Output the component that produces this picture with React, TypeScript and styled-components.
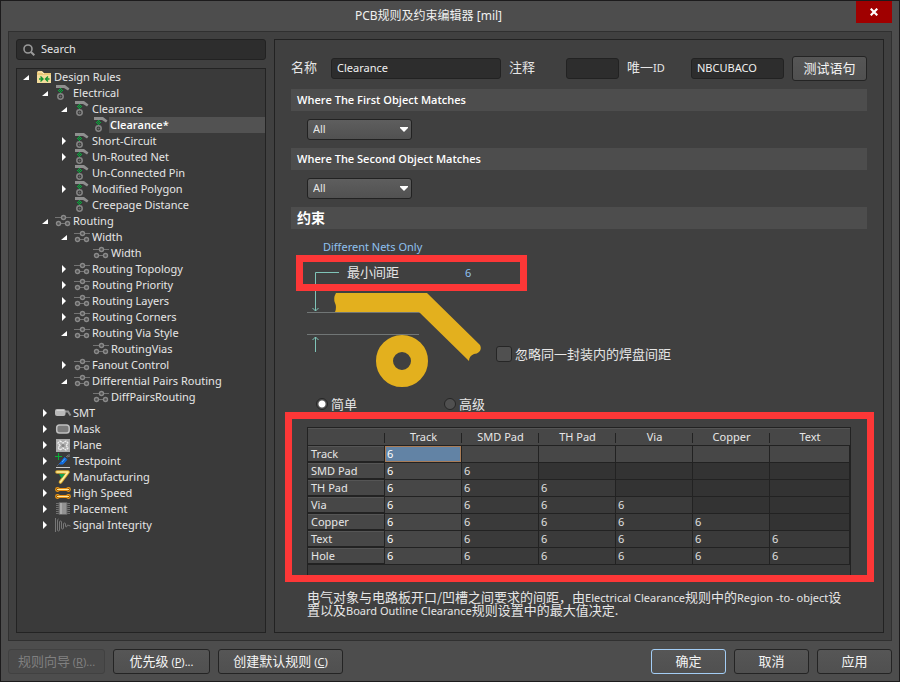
import React from "react";
import styled, { createGlobalStyle, css } from "styled-components";

const LATIN = '"Noto Sans", "Noto Sans CJK SC", sans-serif';
const LATIN_BOLD = '"Open Sans", "Noto Sans", sans-serif';
const CJK = '"Noto Sans CJK SC", "Noto Sans", sans-serif';

const GlobalStyle = createGlobalStyle`
  *, *::before, *::after { box-sizing: border-box; }
  body {
    margin: 0;
    background: #4d4d4d;
    color: #e6e6e6;
    font: 11px/16px ${LATIN};
  }
  button, input, select { font: inherit; color: inherit; margin: 0; }
`;

/* ---------- window frame ---------- */

const Window = styled.div`
  display: flex;
  flex-direction: column;
  min-height: 100vh;
  border: 1px solid #1c1b1c;
  background: #4d4d4d;
`;

const TitleBar = styled.header`
  display: grid;
  grid-template-columns: 1fr 43px;
  height: 30px;
`;

const Title = styled.h1`
  margin: 0;
  text-align: center;
  font: 400 12px/29px ${LATIN};
  color: #f0f0f0;
`;

const CloseButton = styled.button`
  width: 36px;
  height: 22px;
  padding: 0;
  border: 0;
  background: #a00000;
  display: grid;
  place-items: center;
`;

const Body = styled.div`
  flex: 1;
  display: grid;
  grid-template-columns: 250px minmax(0, 1fr);
  gap: 8px;
  margin: 0 7px;
  padding: 7px;
  border: 1px solid #303030;
  background: #404040;
`;

const Footer = styled.footer`
  display: flex;
  gap: 8px;
  padding: 8px 7px 7px;
`;

const Spacer = styled.div`
  flex: 1;
`;

const Button = styled.button<{ $width: number; $primary?: boolean }>`
  flex: none;
  width: ${(p) => p.$width}px;
  height: 25px;
  padding: 0 0 2px;
  border: 1px solid ${(p) => (p.$primary ? "#a3cdf5" : "#242424")};
  border-radius: 3px;
  background: linear-gradient(#565656, #505050);
  color: #f4f4f4;
  font: 13px/20px ${CJK};
  white-space: nowrap;
  &:disabled {
    border-color: #414141;
    background: #4a4a4a;
    color: #808080;
  }
`;

const Small = styled.span`
  font: 11px/10px ${LATIN};
`;

/* ---------- left column ---------- */

const Sidebar = styled.aside`
  display: flex;
  flex-direction: column;
  gap: 8px;
`;

const fieldLook = css`
  height: 21px;
  border: 1px solid #222;
  border-radius: 3px;
  background: #2d2d2d;
  color: #f0f0f0;
`;

const SearchBox = styled.label`
  ${fieldLook}
  display: flex;
  align-items: center;
  gap: 6px;
  padding-left: 6px;
`;

const SearchInput = styled.input`
  flex: 1;
  min-width: 0;
  height: 18px;
  padding: 0 0 2px;
  border: 0;
  outline: 0;
  background: none;
  &::placeholder { color: #e6e6e6; opacity: 1; }
`;

const Tree = styled.ul`
  flex: 1;
  margin: 0;
  padding: 0;
  list-style: none;
  border: 1px solid #232323;
  background: #3a3a3a;
`;

const TreeRow = styled.li<{ $level: number }>`
  display: flex;
  height: 16px;
  padding-left: ${(p) => 5 + p.$level * 19}px;
`;

const Toggle = styled.button`
  width: 8px;
  height: 16px;
  margin-right: 6px;
  padding: 0;
  border: 0;
  background: none;
  display: grid;
  place-items: center;
`;

const TogglePlace = styled.span`
  width: 14px;
`;

const TreeIcon = styled.svg`
  flex: none;
  width: 16px;
  height: 16px;
  overflow: visible;
`;

const TreeLabel = styled.span<{ $selected?: boolean }>`
  flex: 1;
  padding-left: ${(p) => (p.$selected ? 1 : 2)}px;
  white-space: nowrap;
  ${(p) => p.$selected && css`
    background: #525252;
    color: #fff;
    font: 600 11px/16px ${LATIN_BOLD};
  `}
`;

/* ---------- right column ---------- */

const Main = styled.main`
  padding: 16px 16px 14px;
  border: 1px solid #222;
`;

const FieldRow = styled.div`
  display: flex;
  align-items: center;
  height: 25px;
`;

const FieldLabel = styled.label<{ $width: number }>`
  flex: none;
  width: ${(p) => p.$width}px;
  padding-bottom: 3px;
  font: 13px/20px ${CJK};
  white-space: nowrap;
`;

const TextField = styled.input<{ $basis: number }>`
  ${fieldLook}
  flex: 1 1 ${(p) => p.$basis}px;
  width: 0;
  min-width: 0;
  margin-right: 8px;
  padding: 0 5px 2px;
`;

const SectionBar = styled.h2<{ $cjk?: boolean }>`
  height: 22px;
  margin: 8px 0 0;
  padding-left: 6px;
  background: #4d4d4d;
  color: #fff;
  font: ${(p) => (p.$cjk ? `700 14px/20px ${CJK}` : `600 11px/22px ${LATIN_BOLD}`)};
`;

const SelectWrap = styled.div`
  display: grid;
  width: 105px;
  margin: 8px 0 0 16px;
  & > * { grid-area: 1 / 1; }
`;

const Select = styled.select`
  appearance: none;
  height: 21px;
  padding: 0 5px 2px;
  border: 1px solid #222;
  border-radius: 3px;
  background: linear-gradient(#5e5e5e, #515151);
`;

const SelectArrow = styled.svg`
  justify-self: end;
  align-self: center;
  margin-right: 4px;
  pointer-events: none;
`;

const NetScope = styled.p`
  margin: 10px 0 0 32px;
  color: #8fc0f0;
`;

const ClearanceBox = styled.div`
  position: relative;
  z-index: 1;
  display: flex;
  align-items: center;
  width: 231px;
  height: 36px;
  margin-left: 5px;
  padding-left: 44px;
  border: 7px solid #fd3737;
`;

const ClearanceInput = styled.input`
  width: 40px;
  height: 18px;
  padding: 0 0 2px;
  border: 0;
  background: none;
  color: #8fc0f0;
`;

const Scene = styled.div`
  display: flex;
  align-items: flex-start;
  gap: 13px;
  margin: -21px 16px 0;
`;

const IgnoreLabel = styled.label`
  display: flex;
  align-items: center;
  gap: 3px;
  margin-top: 74px;
  font: 13px/20px ${CJK};
`;

const Checkbox = styled.input`
  appearance: none;
  width: 16px;
  height: 16px;
  border: 1px solid #262626;
  border-radius: 3px;
  background: #505050;
`;

const ModeRow = styled.div`
  display: flex;
  height: 18px;
  margin: 7px 0 0 25px;
`;

const ModeLabel = styled.label`
  display: flex;
  align-items: center;
  gap: 3px;
  width: 128px;
  font: 13px/18px ${CJK};
`;

const Radio = styled.input`
  appearance: none;
  width: 12px;
  height: 12px;
  border: 1px solid #262626;
  border-radius: 50%;
  background: #505050;
  &:checked {
    background: radial-gradient(circle, #fff 0 3px, #505050 4px);
  }
`;

const MatrixArea = styled.div`
  position: relative;
  height: 148px;
  margin: 14px 16px 0;
  border: 1px solid #222;
  border-width: 1px 1px 0;
  background: #3a3a3a;
`;

const Highlight = styled.div`
  position: absolute;
  inset: -16px -24px -7px -23px;
  border: 7px solid #fd3737;
  pointer-events: none;
`;

const Matrix = styled.table`
  width: 100%;
  table-layout: fixed;
  border-collapse: separate;
  border-spacing: 0;
`;

const HeadCell = styled.th`
  height: 18px;
  padding: 0;
  border-top: 1px solid #555;
  border-bottom: 1px solid #222;
  background: linear-gradient(#222, #222) right 4px / 1px 10px no-repeat #474747;
  font-weight: 400;
  line-height: 16px;
  &:first-child { width: 77px; }
  &:last-child { width: 80px; background: #474747; }
`;

const RowHead = styled.th`
  height: 17px;
  padding: 0 0 0 3px;
  border: solid #222;
  border-width: 0 1px 2px 0;
  background: #474747;
  box-shadow: inset 0 1px #555;
  font-weight: 400;
  line-height: 15px;
  text-align: left;
`;

const Cell = styled.td<{ $tone: "lit" | "plain" | "empty" | "active" }>`
  height: 17px;
  padding: 0 0 0 2px;
  border: solid #222;
  border-width: 0 1px 1px 0;
  background: ${(p) => ({ lit: "#474747", plain: "#3a3a3a", empty: "#333", active: "#6283a5" })[p.$tone]};
  box-shadow: ${(p) => (p.$tone === "active" ? "inset 0 0 0 1px #a97c57" : "none")};
  color: ${(p) => (p.$tone === "lit" || p.$tone === "active" ? "#fff" : "#e0e0e0")};
  line-height: 16px;
`;

const Note = styled.p`
  margin: 15px 16px 0;
  font: 13px/13px ${CJK};
`;

/* ---------- icons ---------- */

type IconName =
  | "folder" | "electrical" | "routing" | "smt" | "mask" | "plane"
  | "testpoint" | "manufacturing" | "highspeed" | "placement" | "signal";

const ICONS: Record<IconName, React.ReactNode> = {
  folder: (
    <>
      <path d="M1 14V3l1-1h4l2 2h7v10z" fill="#e9c878" />
      <path d="M1 6h14v8H1z" fill="#f3dc9c" />
      <path d="M2 3h4l2 2" stroke="#fbeec4" fill="none" />
      <path d="M3 10h4M4.500 7.500 7 10l-2.500 2.500M13.500 10h-4M12 7.500 9.500 10l2.500 2.500" stroke="#15932f" strokeWidth="1.400" fill="none" />
    </>
  ),
  electrical: (
    <>
      <path d="M1 0h9l4.500 3.500L13 5.500 9 3H1z" fill="#8f8f8f" />
      <path
        d="M5 3h1v1H5zM4 4h1v1H4zM6 4h1v1H6zM3 5h1v1H3zM5 5h1v1H5zM7 5h1v1H7zM4 6h1v1H4zM6 6h1v1H6zM5 7h1v1H5z"
        fill="#00b53a"
      />
      <circle cx="5.500" cy="11.500" r="2.700" fill="#3a3a3a" stroke="#858585" strokeWidth="1.500" />
      <circle cx="5.500" cy="11.500" r="1" fill="#6c6c6c" />
    </>
  ),
  routing: (
    <g stroke="#8a8a8a" strokeWidth="1.400" fill="#505050">
      <path d="M0 4.500h16M1 10.500h14" stroke="#747474" strokeWidth="1" />
      <circle cx="8.500" cy="4.500" r="2" />
      <circle cx="3.500" cy="10.500" r="2" />
      <circle cx="12.500" cy="10.500" r="2" />
    </g>
  ),
  smt: (
    <>
      <path d="M9 6.500h4l2.500 4" stroke="#919191" strokeWidth="2" fill="none" />
      <rect x="0" y="4" width="10.500" height="7" rx="2" fill="#b9b9b9" />
      <path d="M1.500 5.500H9" stroke="#d3d3d3" />
    </>
  ),
  mask: <rect x="1.700" y="4" width="12.500" height="8" rx="2.800" fill="#7b7b7b" stroke="#c0c0c0" strokeWidth="1.500" />,
  plane: (
    <>
      <path d="M1 2h14v13H1z" fill="#adadad" />
      <path d="m5 4 3 2 3-2 2 2-2 2.500 2 2.500-2 2-3-2-3 2-2-2 2-2.500L3 6z" fill="none" stroke="#efefef" strokeWidth="1.300" strokeDasharray="2 .7" />
      <circle cx="8" cy="8.500" r="1.500" fill="#858585" />
    </>
  ),
  testpoint: (
    <>
      <path d="M3.500 0v7M0 3.500h7" stroke="#08ad34" />
      <path d="m11 4 2-2h2M12 4l3-1" stroke="#727272" fill="none" />
      <path d="m2 13 3-3" stroke="#555b69" />
      <path d="M4.500 11 9.500 4.500l2.500 2L8 11z" fill="#126bdb" stroke="#126bdb" strokeWidth="1" strokeLinejoin="round" />
      <path d="m7 9 3-3.500" stroke="#57b5ff" />
      <path d="M1 14.500h14" stroke="#c9c9c9" />
    </>
  ),
  manufacturing: (
    <>
      <path d="M2 3h11L5.500 13" stroke="#dcab30" strokeWidth="3.600" strokeLinecap="round" strokeLinejoin="round" fill="none" />
      <path d="M2 3h11L5.500 13" stroke="#fff0a0" strokeWidth="1.600" strokeLinecap="round" strokeLinejoin="round" fill="none" />
      <path d="M4 5h6L6.500 9.500z" fill="#12a251" />
    </>
  ),
  highspeed: (
    <>
      <path d="M2 4.500h12M2 11.500h12" stroke="#e88b10" strokeWidth="3" />
      <g fill="#713b04" stroke="#ee9b18" strokeWidth="1.200">
        <circle cx="2.500" cy="4.500" r="1.800" /><circle cx="13.500" cy="4.500" r="1.800" />
        <circle cx="2.500" cy="11.500" r="1.800" /><circle cx="13.500" cy="11.500" r="1.800" />
      </g>
      <path d="M2 4.500h12M2 11.500h12" stroke="#ffe79a" />
    </>
  ),
  placement: (
    <>
      <path d="M1 2.500h14M1 4.500h14M1 6.500h14M1 8.500h14M1 10.500h14M1 12.500h14" stroke="#707070" />
      <path d="M4 1.500h8v12H4z" fill="#929292" stroke="#626262" />
      <path d="M6 2v11" stroke="#aaa" strokeWidth="2" />
    </>
  ),
  signal: (
    <path d="M.5 15V1M3.500 2q-1 0-1 2v9q0 1 1 1t1-1V5q0-1 1-1t1 1v6q0 1 1 1t1-1V7q0-1 1-1t1 1v2q0 1 1 1l1-2 3 1" stroke="#777" fill="none" />
  ),
};

/* ---------- data ---------- */

interface Rule {
  level: number;
  icon: IconName;
  label: string;
  open?: boolean;
  leaf?: boolean;
  selected?: boolean;
}

const RULES: Rule[] = [
  { level: 0, icon: "folder", label: "Design Rules", open: true },
  { level: 1, icon: "electrical", label: "Electrical", open: true },
  { level: 2, icon: "electrical", label: "Clearance", open: true },
  { level: 3, icon: "electrical", label: "Clearance*", leaf: true, selected: true },
  { level: 2, icon: "electrical", label: "Short-Circuit" },
  { level: 2, icon: "electrical", label: "Un-Routed Net" },
  { level: 2, icon: "electrical", label: "Un-Connected Pin", leaf: true },
  { level: 2, icon: "electrical", label: "Modified Polygon" },
  { level: 2, icon: "electrical", label: "Creepage Distance", leaf: true },
  { level: 1, icon: "routing", label: "Routing", open: true },
  { level: 2, icon: "routing", label: "Width", open: true },
  { level: 3, icon: "routing", label: "Width", leaf: true },
  { level: 2, icon: "routing", label: "Routing Topology" },
  { level: 2, icon: "routing", label: "Routing Priority" },
  { level: 2, icon: "routing", label: "Routing Layers" },
  { level: 2, icon: "routing", label: "Routing Corners" },
  { level: 2, icon: "routing", label: "Routing Via Style", open: true },
  { level: 3, icon: "routing", label: "RoutingVias", leaf: true },
  { level: 2, icon: "routing", label: "Fanout Control" },
  { level: 2, icon: "routing", label: "Differential Pairs Routing", open: true },
  { level: 3, icon: "routing", label: "DiffPairsRouting", leaf: true },
  { level: 1, icon: "smt", label: "SMT" },
  { level: 1, icon: "mask", label: "Mask" },
  { level: 1, icon: "plane", label: "Plane" },
  { level: 1, icon: "testpoint", label: "Testpoint" },
  { level: 1, icon: "manufacturing", label: "Manufacturing" },
  { level: 1, icon: "highspeed", label: "High Speed" },
  { level: 1, icon: "placement", label: "Placement" },
  { level: 1, icon: "signal", label: "Signal Integrity" },
];

const COLUMNS = ["Track", "SMD Pad", "TH Pad", "Via", "Copper", "Text"];
const ROWS = [...COLUMNS, "Hole"];

/* ---------- parts ---------- */

function RuleRow({ rule }: { rule: Rule }) {
  return (
    <TreeRow $level={rule.level} role="treeitem" aria-level={rule.level + 1} aria-selected={!!rule.selected}>
      {rule.leaf ? (
        <TogglePlace />
      ) : (
        <Toggle aria-label={rule.label} aria-expanded={!!rule.open}>
          <svg width="8" height="8" viewBox="0 0 8 8" fill="#fff">
            <path d={rule.open ? "M7 2v5H1z" : "M2 0l4 4-4 4z"} />
          </svg>
        </Toggle>
      )}
      <TreeIcon viewBox="0 0 16 16" aria-hidden="true">{ICONS[rule.icon]}</TreeIcon>
      <TreeLabel $selected={rule.selected}>{rule.label}</TreeLabel>
    </TreeRow>
  );
}

function ScopeSelect({ label }: { label: string }) {
  return (
    <SelectWrap>
      <Select aria-label={label} defaultValue="All">
        <option>All</option>
      </Select>
      <SelectArrow width="8" height="5" viewBox="0 0 8 5" aria-hidden="true">
        <path d="M0 0h8v1L4 5 0 1z" fill="#fff" />
      </SelectArrow>
    </SelectWrap>
  );
}

function ClearanceDrawing() {
  return (
    <svg width="176" height="118" viewBox="0 0 176 118" fill="none" aria-hidden="true">
      <path d="M0 42.500h113M0 64.500h112" stroke="#717676" />
      <path d="M32 2.500H8.500V41M5.500 38l3 3 3-3M8.500 82V67M5.500 70l3-3 3 3" stroke="#7fc4b8" />
      <path
        d="M29 23H120L173 75Q175 79 172 82Q170 84 167 84Q162 86 162 91L112 42H28Q30 37 28 33Q26 28 29 23Z"
        fill="#e3b01e"
      />
      <circle cx="95" cy="91" r="17.500" stroke="#e3b01e" strokeWidth="17" />
    </svg>
  );
}

function cellTone(row: number, col: number) {
  if (row === 0 && col === 0) return "active";
  if (row === 0 || col === 0) return "lit";
  return col > row ? "empty" : "plain";
}

function ClearanceMatrix() {
  return (
    <Matrix>
      <thead>
        <tr>
          <HeadCell as="td" />
          {COLUMNS.map((name) => (
            <HeadCell key={name} scope="col">{name}</HeadCell>
          ))}
        </tr>
      </thead>
      <tbody>
        {ROWS.map((name, row) => (
          <tr key={name}>
            <RowHead scope="row">{name}</RowHead>
            {COLUMNS.map((column, col) => (
              <Cell key={column} $tone={cellTone(row, col)}>{col <= row ? "6" : ""}</Cell>
            ))}
          </tr>
        ))}
      </tbody>
    </Matrix>
  );
}

export default function App() {
  return (
    <>
      <GlobalStyle />
      <Window>
        <TitleBar>
          <Title>PCB规则及约束编辑器 [mil]</Title>
          <CloseButton aria-label="关闭">
            <svg width="8" height="8" viewBox="0 0 8 8">
              <path d="m.7.7 6.600 6.600M7.300.7.700 7.300" stroke="#fff" strokeWidth="2.200" />
            </svg>
          </CloseButton>
        </TitleBar>

        <Body>
          <Sidebar>
            <SearchBox>
              <svg width="12" height="12" viewBox="0 0 12 12" fill="none" stroke="#9a9a9a" aria-hidden="true">
                <circle cx="5" cy="5" r="4" strokeWidth="1.600" />
                <path d="m8 8 3.300 3.300" strokeWidth="2" />
              </svg>
              <SearchInput placeholder="Search" aria-label="Search" />
            </SearchBox>
            <Tree role="tree">
              {RULES.map((rule, i) => (
                <RuleRow key={i} rule={rule} />
              ))}
            </Tree>
          </Sidebar>

          <Main>
            <FieldRow>
              <FieldLabel $width={40} htmlFor="name">名称</FieldLabel>
              <TextField $basis={170} id="name" defaultValue="Clearance" />
              <FieldLabel $width={57} htmlFor="comment">注释</FieldLabel>
              <TextField $basis={53} id="comment" />
              <FieldLabel $width={64} htmlFor="uid">唯一<Small>ID</Small></FieldLabel>
              <TextField $basis={93} id="uid" defaultValue="NBCUBACO" />
              <Button $width={75}>测试语句</Button>
            </FieldRow>

            <SectionBar>Where The First Object Matches</SectionBar>
            <ScopeSelect label="Where The First Object Matches" />
            <SectionBar>Where The Second Object Matches</SectionBar>
            <ScopeSelect label="Where The Second Object Matches" />
            <SectionBar $cjk>约束</SectionBar>

            <NetScope>Different Nets Only</NetScope>
            <ClearanceBox>
              <FieldLabel $width={118} htmlFor="gap">最小间距</FieldLabel>
              <ClearanceInput id="gap" defaultValue="6" />
            </ClearanceBox>
            <Scene>
              <ClearanceDrawing />
              <IgnoreLabel>
                <Checkbox type="checkbox" />
                忽略同一封装内的焊盘间距
              </IgnoreLabel>
            </Scene>
            <ModeRow>
              <ModeLabel>
                <Radio type="radio" name="mode" defaultChecked />
                简单
              </ModeLabel>
              <ModeLabel>
                <Radio type="radio" name="mode" />
                高级
              </ModeLabel>
            </ModeRow>

            <MatrixArea>
              <ClearanceMatrix />
              <Highlight />
            </MatrixArea>

            <Note>
              电气对象与电路板开口/凹槽之间要求的间距，由<Small>Electrical Clearance</Small>规则中的
              <Small>Region -to- object</Small>设置以及<Small>Board Outline Clearance</Small>规则设置中的最大值决定.
            </Note>
          </Main>
        </Body>

        <Footer>
          <Button $width={97} disabled>规则向导 <Small>(<u>R</u>)...</Small></Button>
          <Button $width={97}>优先级 <Small>(<u>P</u>)...</Small></Button>
          <Button $width={125}>创建默认规则 <Small>(<u>C</u>)</Small></Button>
          <Spacer />
          <Button $width={75} $primary>确定</Button>
          <Button $width={75}>取消</Button>
          <Button $width={75}>应用</Button>
        </Footer>
      </Window>
    </>
  );
}
